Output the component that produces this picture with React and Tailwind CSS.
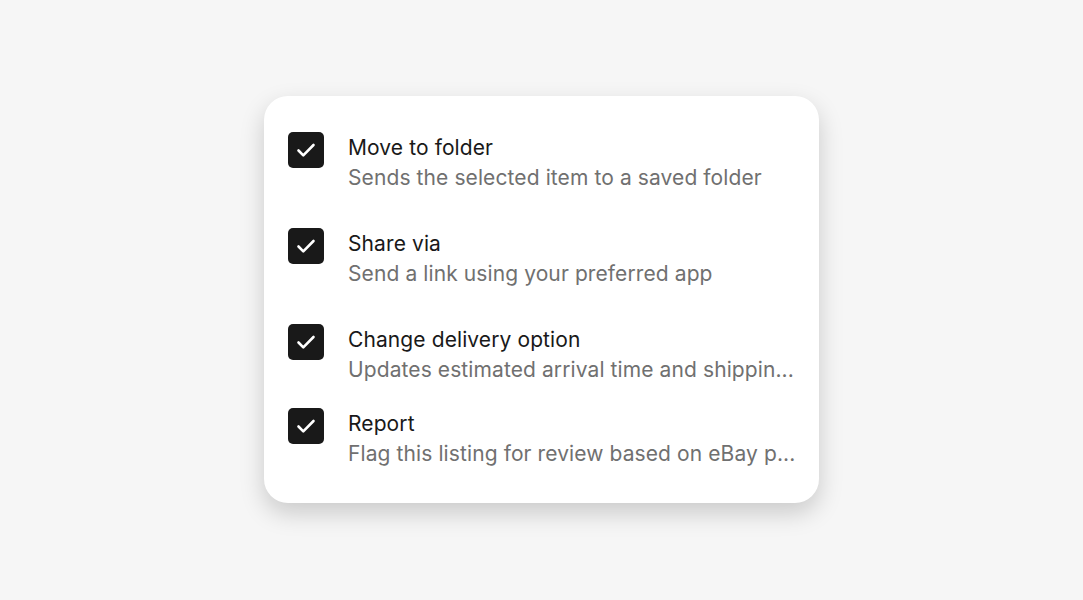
const items = [
    { title: "Move to folder", desc: "Sends the selected item to a saved folder", space: "pb-[35px]" },
    { title: "Share via", desc: "Send a link using your preferred app", space: "pb-[35px]" },
    { title: "Change delivery option", desc: "Updates estimated arrival time and shippin...", space: "pb-[23px]" },
    { title: "Report", desc: "Flag this listing for review based on eBay p...", space: "" },
]

function CheckBox() {
    return (
        <div className="flex h-9 w-9 shrink-0 items-center justify-center rounded-[5px] bg-[#191919]">
            <svg width="24" height="24" viewBox="0 0 24 24" fill="none">
                <path d="M4.5 12.5l4.8 4.8L19.5 7" stroke="white" strokeWidth="2.6" strokeLinecap="round" strokeLinejoin="round" />
            </svg>
        </div>
    )
}

export default function App() {
    return (
        <div className="flex min-h-[600px] w-full justify-center bg-[#f6f6f6] pt-24" style={{ fontFamily: "Inter, 'Noto Sans', sans-serif" }}>
            <div className="h-[407px] w-[555px] rounded-[24px] bg-white pl-6 pr-5 pt-9 shadow-[0_10px_24px_rgba(0,0,0,0.18)]">
                {items.map((item) => (
                    <div key={item.title} className={"flex gap-6 " + item.space}>
                        <CheckBox />
                        <div className="min-w-0 flex-1 pt-px">
                            <div className="whitespace-nowrap text-[21px] leading-[30px] tracking-[0.1px] text-[#191919]">{item.title}</div>
                            <div className="whitespace-nowrap text-[21px] leading-[30px] tracking-[0.1px] text-[#707070]">{item.desc}</div>
                        </div>
                    </div>
                ))}
            </div>
        </div>
    )
}
